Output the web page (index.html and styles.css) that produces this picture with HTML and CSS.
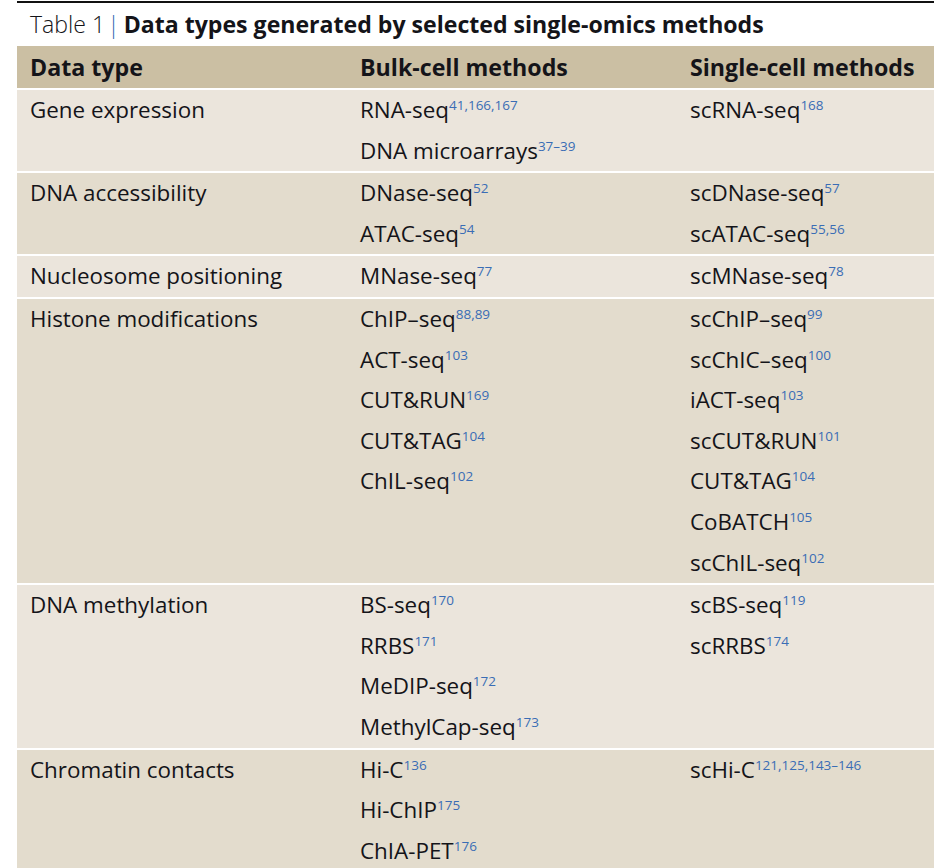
FILE: index.html
```html
<!DOCTYPE html>
<html>
<head>
<meta charset="utf-8">
<link rel="stylesheet" href="styles.css">
</head>
<body>
<div class="page">
  <div class="rule"></div>
  <h1 class="title"><span class="label">Table 1</span><span class="bar">|</span><span class="caption">Data types generated by selected single-omics methods</span></h1>
  <div class="table">
    <div class="row head">
      <div class="cell">Data type</div>
      <div class="cell">Bulk-cell methods</div>
      <div class="cell">Single-cell methods</div>
    </div>
    <div class="row light">
      <div class="cell"><div class="line">Gene expression</div></div>
      <div class="cell">
        <div class="line">RNA-seq<sup>41,166,167</sup></div>
        <div class="line">DNA microarrays<sup>37–39</sup></div>
      </div>
      <div class="cell"><div class="line">scRNA-seq<sup>168</sup></div></div>
    </div>
    <div class="row dark">
      <div class="cell"><div class="line">DNA accessibility</div></div>
      <div class="cell">
        <div class="line">DNase-seq<sup>52</sup></div>
        <div class="line">ATAC-seq<sup>54</sup></div>
      </div>
      <div class="cell">
        <div class="line">scDNase-seq<sup>57</sup></div>
        <div class="line">scATAC-seq<sup>55,56</sup></div>
      </div>
    </div>
    <div class="row light">
      <div class="cell"><div class="line">Nucleosome positioning</div></div>
      <div class="cell"><div class="line">MNase-seq<sup>77</sup></div></div>
      <div class="cell"><div class="line">scMNase-seq<sup>78</sup></div></div>
    </div>
    <div class="row dark">
      <div class="cell"><div class="line">Histone modifications</div></div>
      <div class="cell">
        <div class="line">ChIP–seq<sup>88,89</sup></div>
        <div class="line">ACT-seq<sup>103</sup></div>
        <div class="line">CUT&amp;RUN<sup>169</sup></div>
        <div class="line">CUT&amp;TAG<sup>104</sup></div>
        <div class="line">ChIL-seq<sup>102</sup></div>
      </div>
      <div class="cell">
        <div class="line">scChIP–seq<sup>99</sup></div>
        <div class="line">scChIC–seq<sup>100</sup></div>
        <div class="line">iACT-seq<sup>103</sup></div>
        <div class="line">scCUT&amp;RUN<sup>101</sup></div>
        <div class="line">CUT&amp;TAG<sup>104</sup></div>
        <div class="line">CoBATCH<sup>105</sup></div>
        <div class="line">scChIL-seq<sup>102</sup></div>
      </div>
    </div>
    <div class="row light">
      <div class="cell"><div class="line">DNA methylation</div></div>
      <div class="cell">
        <div class="line">BS-seq<sup>170</sup></div>
        <div class="line">RRBS<sup>171</sup></div>
        <div class="line">MeDIP-seq<sup>172</sup></div>
        <div class="line">MethylCap-seq<sup>173</sup></div>
      </div>
      <div class="cell">
        <div class="line">scBS-seq<sup>119</sup></div>
        <div class="line">scRRBS<sup>174</sup></div>
      </div>
    </div>
    <div class="row dark">
      <div class="cell"><div class="line">Chromatin contacts</div></div>
      <div class="cell">
        <div class="line">Hi-C<sup>136</sup></div>
        <div class="line">Hi-ChIP<sup>175</sup></div>
        <div class="line">ChIA-PET<sup>176</sup></div>
      </div>
      <div class="cell"><div class="line">scHi-C<sup>121,125,143–146</sup></div></div>
    </div>
  </div>
</div>
</body>
</html>
```

FILE: styles.css
```css
html, body {
  margin: 0;
  padding: 0;
  background: #ffffff;
}

body {
  font-family: "Open Sans", "Lato", sans-serif;
  color: #141419;
  overflow: hidden;
}

.page {
  padding-left: 17px;
}

.rule {
  height: 2px;
  margin-top: 1px;
  background: #111111;
}

.title {
  margin: 0;
  padding-left: 13px;
  height: 43px;
  line-height: 42px;
  font-size: 23.1px;
  font-weight: 400;
  white-space: nowrap;
}

.label {
  font-weight: 300;
}

.bar {
  color: #2d66b0;
  font-weight: 300;
  margin: 0 4px 0 2px;
}

.caption {
  font-weight: 700;
}

.table {
  display: flex;
  flex-direction: column;
  gap: 2px;
}

.row {
  display: grid;
  grid-template-columns: 330px 330px 1fr;
  padding-left: 13px;
  font-size: 22.4px;
}

.row.head {
  background: #cbbfa3;
  height: 42px;
  line-height: 42px;
  font-size: 23.2px;
  font-weight: 700;
}

.row.light {
  background: #ebe5dc;
}

.row.dark {
  background: #e3dccd;
}

.line {
  height: 40.6px;
  line-height: 40.6px;
  white-space: nowrap;
}

sup {
  font-size: 13.5px;
  color: #3a6db5;
  vertical-align: 0;
  position: relative;
  top: -8px;
  margin-left: 0;
}
```
